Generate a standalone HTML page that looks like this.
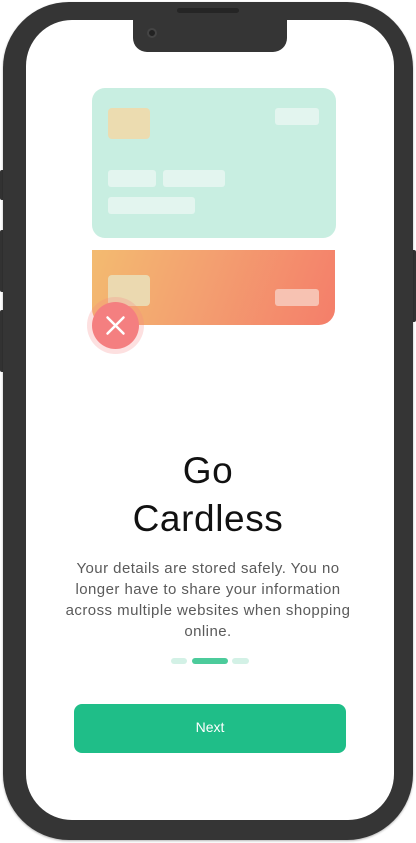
<!DOCTYPE html>
<html><head><style>
*{margin:0;padding:0;box-sizing:border-box}
body{width:416px;height:843px;background:#fff;position:relative;overflow:hidden;font-family:"Liberation Sans",sans-serif}
.abs{position:absolute}
</style></head><body>
<div class="abs" style="left:0;top:170px;width:5px;height:30px;background:#333;border-radius:2px"></div>
<div class="abs" style="left:0;top:230px;width:5px;height:62px;background:#333;border-radius:2px"></div>
<div class="abs" style="left:0;top:310px;width:5px;height:62px;background:#333;border-radius:2px"></div>
<div class="abs" style="left:411px;top:250px;width:5px;height:72px;background:#333;border-radius:2px"></div>
<div class="abs" style="left:3px;top:2px;width:410px;height:838px;background:#353535;border-radius:66px;box-shadow:0 1px 2px rgba(0,0,0,.3)"></div>
<div class="abs" style="left:26px;top:20px;width:368px;height:800px;background:#fff;border-radius:46px;overflow:hidden">
  <div class="abs" style="left:107px;top:-2px;width:154px;height:34px;background:#353535;border-radius:0 0 14px 14px"></div>
  <div class="abs" style="left:121px;top:8px;width:10px;height:10px;background:#222;border-radius:50%;border:2px solid #444"></div>
</div>
<div class="abs" style="left:177px;top:8px;width:62px;height:5px;background:#252525;border-radius:3px"></div>

<div class="abs" style="left:92px;top:88px;width:244px;height:150px;background:#c8eee1;border-radius:13px"></div>
<div class="abs" style="left:108px;top:108px;width:42px;height:31px;background:#ecdcb0;border-radius:4px"></div>
<div class="abs" style="left:275px;top:108px;width:44px;height:17px;background:#e3f5ef;border-radius:3px"></div>
<div class="abs" style="left:108px;top:170px;width:48px;height:17px;background:#e3f5ef;border-radius:3px"></div>
<div class="abs" style="left:163px;top:170px;width:62px;height:17px;background:#e3f5ef;border-radius:3px"></div>
<div class="abs" style="left:108px;top:197px;width:87px;height:17px;background:#e3f5ef;border-radius:3px"></div>

<div class="abs" style="left:92px;top:250px;width:243px;height:75px;background:linear-gradient(110deg,#f3bb70,#f3a070 45%,#f47e6a);border-radius:0 0 16px 16px"></div>
<div class="abs" style="left:108px;top:275px;width:42px;height:31px;background:#ebd9b0;border-radius:4px"></div>
<div class="abs" style="left:275px;top:289px;width:44px;height:17px;background:#f7c2b2;border-radius:3px"></div>
<div class="abs" style="left:87px;top:297px;width:57px;height:57px;background:rgba(246,130,130,.25);border-radius:50%"></div>
<div class="abs" style="left:92px;top:302px;width:47px;height:47px;background:#f47f80;border-radius:50%"></div>
<svg class="abs" style="left:92px;top:302px" width="47" height="47"><path d="M15.5 15.5L31.5 31.5M31.5 15.5L15.5 31.5" stroke="#fff" stroke-width="2.5" stroke-linecap="round"/></svg>

<div class="abs" style="left:0;width:416px;top:447px;text-align:center;font-size:37px;line-height:48px;color:#111;letter-spacing:0.6px">Go<br>Cardless</div>
<div class="abs" style="left:0;width:416px;top:558px;text-align:center;font-size:15px;line-height:21px;color:#5a5a5a;white-space:nowrap;letter-spacing:0.45px">Your details are stored safely. You no<br>longer have to share your information<br>across multiple websites when shopping<br>online.</div>

<div class="abs" style="left:171px;top:658px;width:16px;height:6px;background:#d3f1e6;border-radius:3px"></div>
<div class="abs" style="left:192px;top:658px;width:36px;height:6px;background:#4ccb9b;border-radius:3px"></div>
<div class="abs" style="left:232px;top:658px;width:17px;height:6px;background:#d3f1e6;border-radius:3px"></div>

<div class="abs" style="left:74px;top:704px;width:272px;height:49px;background:#1fbe88;border-radius:8px;color:#fff;font-size:14px;text-align:center;line-height:47px">Next</div>
</body></html>
